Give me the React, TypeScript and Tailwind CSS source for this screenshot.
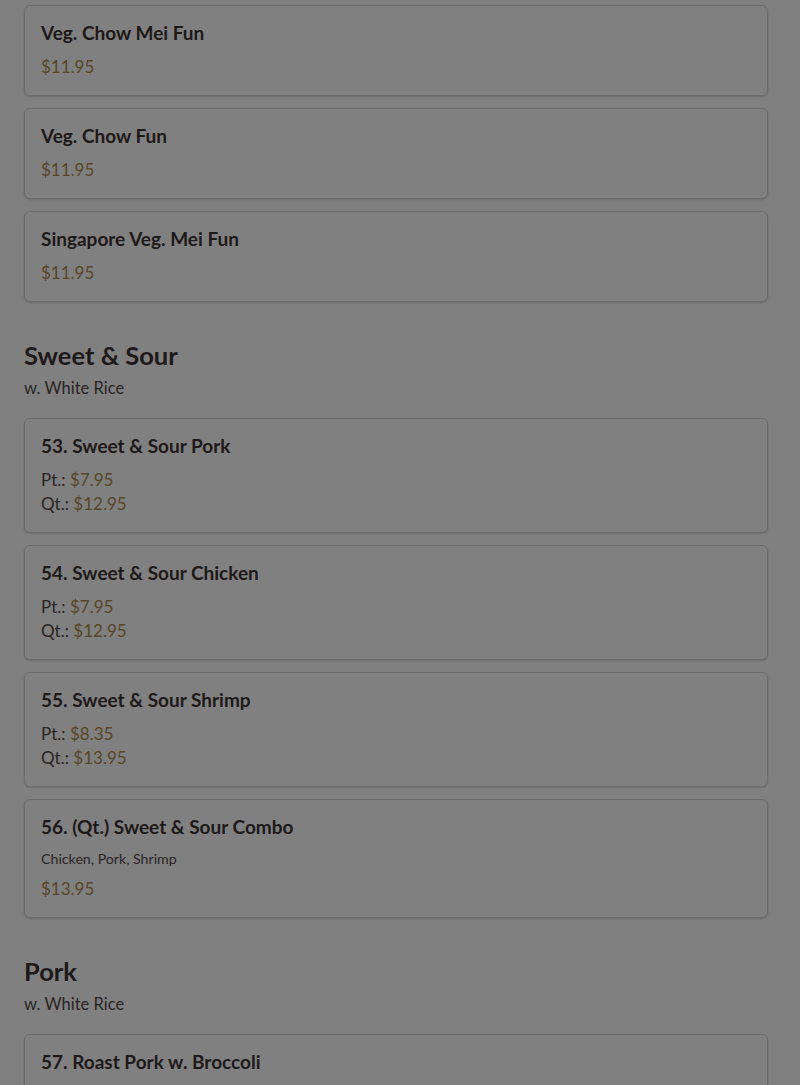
type Price = { label?: string; value: string }

type MenuItem = {
  name: string
  description?: string
  prices: Price[]
}

type Section = {
  title?: string
  subtitle?: string
  items: MenuItem[]
}

const sections: Section[] = [
  {
    items: [
      { name: "Veg. Chow Mei Fun", prices: [{ value: "$11.95" }] },
      { name: "Veg. Chow Fun", prices: [{ value: "$11.95" }] },
      { name: "Singapore Veg. Mei Fun", prices: [{ value: "$11.95" }] },
    ],
  },
  {
    title: "Sweet & Sour",
    subtitle: "w. White Rice",
    items: [
      {
        name: "53. Sweet & Sour Pork",
        prices: [
          { label: "Pt.:", value: "$7.95" },
          { label: "Qt.:", value: "$12.95" },
        ],
      },
      {
        name: "54. Sweet & Sour Chicken",
        prices: [
          { label: "Pt.:", value: "$7.95" },
          { label: "Qt.:", value: "$12.95" },
        ],
      },
      {
        name: "55. Sweet & Sour Shrimp",
        prices: [
          { label: "Pt.:", value: "$8.35" },
          { label: "Qt.:", value: "$13.95" },
        ],
      },
      {
        name: "56. (Qt.) Sweet & Sour Combo",
        description: "Chicken, Pork, Shrimp",
        prices: [{ value: "$13.95" }],
      },
    ],
  },
  {
    title: "Pork",
    subtitle: "w. White Rice",
    items: [
      {
        name: "57. Roast Pork w. Broccoli",
        prices: [
          { label: "Pt.:", value: "$8.35" },
          { label: "Qt.:", value: "$13.95" },
        ],
      },
    ],
  },
]

function MenuCard({ item }: { item: MenuItem }) {
  return (
    <div className="rounded-md border border-[#6c6c6c] bg-[#808080] px-4 pt-[14px] pb-4 shadow-[0_1px_2px_rgba(0,0,0,0.15)]">
      <h3 className="mb-[10px] text-[19px] font-bold leading-[25px] text-[#1d1919]">{item.name}</h3>
      {item.description && (
        <p className="mb-2 text-[14.2px] leading-5 text-[#2a2525]">{item.description}</p>
      )}
      <div>
        {item.prices.map((p, i) => (
          <div key={i} className="text-[17px] leading-6 text-[#2a2525]">
            {p.label && <span>{p.label} </span>}
            <span className="text-[#574629]">{p.value}</span>
          </div>
        ))}
      </div>
    </div>
  )
}

export default function App() {
  return (
    <div
      className="h-[1085px] overflow-hidden bg-[#808080] pl-6 pr-8 pt-[5px]"
      style={{ fontFamily: "Lato, 'Open Sans', sans-serif" }}
    >
      <div className="flex flex-col gap-[37px]">
        {sections.map((section, si) => (
          <section key={si}>
            {section.title && (
              <div className="mb-[18px]">
                <h2 className="text-[25.5px] font-bold leading-8 text-[#1d1919]">{section.title}</h2>
                <p className="mt-[5px] text-[16.5px] leading-6 text-[#2a2525]">{section.subtitle}</p>
              </div>
            )}
            <div className="flex flex-col gap-3">
              {section.items.map((item) => (
                <MenuCard key={item.name} item={item} />
              ))}
            </div>
          </section>
        ))}
      </div>
    </div>
  )
}
